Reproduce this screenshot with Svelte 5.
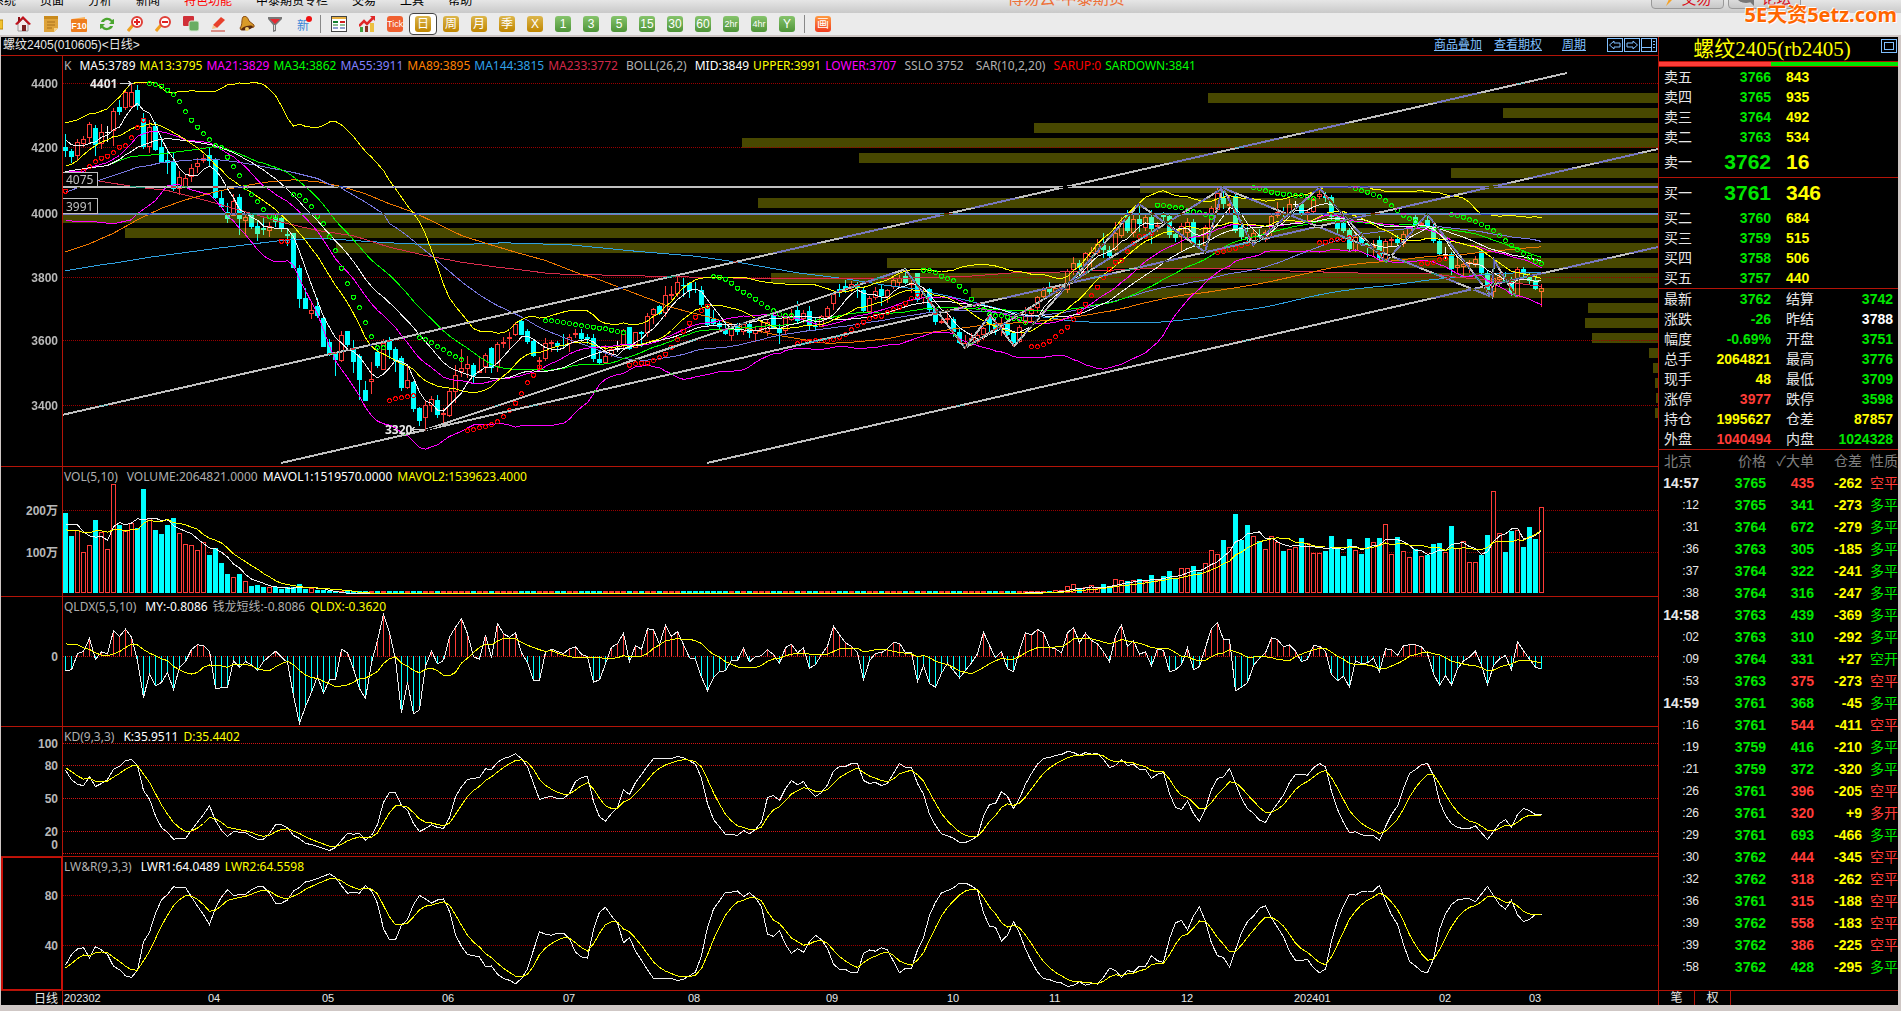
<script>
    const nums = (text) => text.trim().split(/\s+/).map(Number);

    const menu = ['系统', '页面', '分析', '新闻', '特色功能', '中泰期货专栏', '交易', '工具', '帮助'];
    const periods = ['日', '周', '月', '季', 'X', '1', '3', '5', '15', '30', '60', '2hr', '4hr', 'Y'];

    const legend = [
        ['K', 'dim wide'], ['MA5:3789', 'white'], ['MA13:3795', 'yellow'], ['MA21:3829', 'magenta'],
        ['MA34:3862', 'lime'], ['MA55:3911', 'violet'], ['MA89:3895', 'orange'], ['MA144:3815', 'sky'],
        ['MA233:3772', 'crimson wide'], ['BOLL(26,2)', 'dim wide'], ['MID:3849', 'white'], ['UPPER:3991', 'yellow'],
        ['LOWER:3707', 'magenta wide'], ['SSLO 3752', 'dim wider'], ['SAR(10,2,20)', 'dim wide'], ['SARUP:0', 'red'],
        ['SARDOWN:3841', 'lime']
    ];

    const sells = [['卖五', 3766, 843], ['卖四', 3765, 935], ['卖三', 3764, 492], ['卖二', 3763, 534], ['卖一', 3762, 16]];
    const buys = [['买一', 3761, 346], ['买二', 3760, 684], ['买三', 3759, 515], ['买四', 3758, 506], ['买五', 3757, 440]];

    const stats = [
        ['最新', '3762', 'green'], ['结算', '3742', 'green'],
        ['涨跌', '-26', 'green'], ['昨结', '3788', 'white'],
        ['幅度', '-0.69%', 'green'], ['开盘', '3751', 'green'],
        ['总手', '2064821', 'yellow'], ['最高', '3776', 'green'],
        ['现手', '48', 'yellow'], ['最低', '3709', 'green'],
        ['涨停', '3977', 'red'], ['跌停', '3598', 'green'],
        ['持仓', '1995627', 'yellow'], ['仓差', '87857', 'yellow'],
        ['外盘', '1040494', 'red'], ['内盘', '1024328', 'green']
    ];

    // time, price, volume, open interest change, kind
    const ticks = `14:57 3765 435 -262 空平
:12 3765 341 -273 多平
:31 3764 672 -279 多平
:36 3763 305 -185 多平
:37 3764 322 -241 多平
:38 3764 316 -247 多平
14:58 3763 439 -369 多平
:02 3763 310 -292 多平
:09 3764 331 +27 空开
:53 3763 375 -273 空平
14:59 3761 368 -45 多平
:16 3761 544 -411 空平
:19 3759 416 -210 多平
:21 3759 372 -320 多平
:26 3761 396 -205 空平
:26 3761 320 +9 多开
:29 3761 693 -466 多平
:30 3762 444 -345 空平
:32 3762 318 -262 空平
:36 3761 315 -188 空平
:39 3762 558 -183 空平
:39 3762 386 -225 空平
:58 3762 428 -295 多平`.split('\n').map((row) => row.split(' '));

    // candles: colour, high, body top, body bottom, low (third-pixel units)
    const candleParts = [
        [0, `c 253 291 303 321,c 298 303 321 340,r 267 276 317 330,r 258 268 281 290,r 216 223 265 280,c 226 234 285 318,r 222 247 281 297,w 228 247 250 276,r 175 184 244 288,c 150 171 186 195,r 116 127 173 180,r 98 127 171 175,c 105 120 167 180,c 190 203 290 296,r 210 232 290 308,c 215 228 299 303,c 262 291 336 336,c 299 330 339 373,c 309 335 418 423,r 363 381 418 434,r 375 384 410 415,r 342 355 380 395,r 324 340 350 368,r 312 323 333 340,c 295 315 333 352,c 323 330 443 447,c 420 444 470 474,c 460 487 507 520,r 433 454 497 497,c 433 441 508 555,r 488 502 514 557,c 490 496 530 536,c 513 528 552 573,c 500 535 540 555,r 515 528 544 560,c 490 503 516 530,c 500 504 536 545,c 540 552 557 588,c 548 550 655 655,c 646 655 748 774,c 715 744 776 776,r 752 779 791 808,c 745 768 797 805,c 800 805 890 890,c 868 877 913 917,c 905 910 930 978,r 843 856 932 935,c 843 844 885 890,c 870 895 935 970,c 912 919 989 1050,c 993 1020 1053 1053,r 935 986 996 1033,c 893 906 947 955,r 868 878 959 960,c 862 871 899 928,c 892 898 934 965,c 918 924 1013 1022,r 948 989 1013 1018,c 993 996 1076 1085,c 1072 1075 1112 1128,r 1050 1066 1105 1143,r 1038 1047 1069 1085,c 1035 1050 1094 1103,r 1075 1090 1096 1120,r 1018 1022 1099 1100,r 945 976 1027 1060,r 898 953 966 980,r 918 943 958 985,c 940 945 977 1002,r 925 963 968 970,r 910 914 950 970,c 890 894 953 968,r 875 883 951 965`],
        [450, `r 412 427 433 445,r 395 411 415 448,r 365 373 404 408,c 360 363 404 405,c 388 393 425 432,c 420 423 467 472,r 470 481 485 510,r 415 430 477 482,r 420 427 431 455,c 423 430 438 455,c 403 435 437 446,r 402 411 433 457,r 388 400 404 413,c 388 399 416 421,c 403 412 418 432,c 402 415 477 485,c 450 477 488 492,r 435 469 490 492,r 437 447 465 472,w 423 443 446 457,r 386 390 437 444,c 381 381 447 450,r 397 397 443 445,c 393 397 402 440,r 340 347 400 410,r 325 328 345 373,c 316 318 342 345,r 258 286 340 350,r 258 283 288 300,r 225 247 283 292,c 233 255 258 290,c 245 250 272 293,c 246 266 271 278,c 258 270 316 322,c 312 318 376 380,c 330 358 373 376,c 362 368 381 397,c 363 386 402 406,r 372 388 407 423,c 370 382 396 405,r 365 373 395 405,c 370 373 400 415,r 378 389 402 425,r 360 384 389 400,r 358 365 395 407,c 345 346 383 388,c 372 384 399 432,r 348 355 393 405,r 328 352 360 362,c 303 329 362 370,r 330 340 357 370,c 318 333 378 393,c 355 377 382 392,r 345 348 380 382,r 318 324 350 355,r 280 282 311 330,c 252 268 276 292,c 240 257 266 280,r 243 253 262 275,c 245 253 263 295,c 265 271 333 338,r 288 295 335 338,r 262 273 294 300,c 255 268 288 318,r 268 270 292 310,r 230 240 262 268,r 226 233 248 262,c 207 228 248 252,r 240 248 253 278,c 218 220 300 305,r 262 281 294 312,c 265 267 330 335,c 325 328 365 375,r 350 363 370 372,r 328 353 357 368,c 350 358 395 410,c 385 397 430 433,r 405 428 440 448,r 400 415 432 438,r 400 405 425 432,r 380 383 405 420,c 345 352 372 400,c 350 370 392 405,r 352 372 385 408,c 365 372 405 410,c 395 400 430 440,r 375 380 427 430,r 322 342 362 375,r 318 327 342 365,r 288 292 325 340`],
        [30, `r 680 690 712 720,c 665 680 697 702,r 680 683 698 700,r 672 680 690 696,r 627 632 690 700,r 592 608 630 645,c 600 608 622 650,r 575 580 640 645,r 560 577 590 620,r 538 551 580 585,c 519 556 570 595,c 558 570 588 592,r 485 520 570 573,r 470 485 527 535,c 450 463 512 518,r 463 478 520 530,c 430 478 491 515,r 465 471 505 512,c 450 472 508 552,r 485 494 500 515,c 457 463 472 490,c 463 467 525 535,c 520 523 533 545,r 490 498 530 575,r 475 487 520 535,c 478 486 552 560,c 540 552 556 562,r 495 500 557 560,r 437 445 505 510,r 383 400 450 455,c 383 413 432 448,r 405 432 437 465,c 400 407 513 520,c 480 502 530 538,c 500 530 538 545,r 510 520 545 560,c 508 524 530 545,r 510 515 540 545,r 460 468 517 530,r 425 455 468 475,c 440 458 466 480,r 418 432 463 468,w 422 433 436 450,c 428 433 458 468,r 448 455 463 490,r 415 418 455 460,r 385 402 410 418,c 395 408 413 425,c 405 411 472 480,c 462 470 507 518,c 475 490 513 518,c 505 510 567 572,r 520 530 572 575,c 515 530 548 558,c 545 550 560 590,r 540 558 563 590,c 528 540 595 602,r 538 542 600 608,r 530 537 543 560,c 525 537 550 558,r 512 522 552 560,r 500 505 525 530,c 465 470 495 500,r 480 488 495 500,c 460 480 498 502,c 485 498 542 548,c 535 543 582 585,w 562 582 586 598,c 575 583 627 645,r 590 615 625 638,r 605 613 622 655,r 600 606 612 640,r 588 597 612 620,c 568 574 640 645,c 630 640 690 705,r 600 655 695 712,r 635 652 660 680,c 635 660 663 670,c 650 660 698 708,r 620 626 707 712,c 620 628 642 650,c 640 645 662 672,c 645 660 686 690,r 673 685 697 740`]
    ];

    const x = (k) => 64 + 6 * k;
    const priceY = (v) => v / 3 - 6;

    const candles = candleParts.flatMap(([shift, text]) =>
        text.split(',').map((item) => {
            const [tone, ...values] = item.split(' ');
            return [tone, ...values.map((v) => +v + shift)];
        })
    ).map(([tone, high, top, bottom, low], k) => {
        const y = [high, top, bottom, low].map((v) => Math.round(priceY(v)));
        return {
            k, tone, x: x(k), high: y[0], top: y[1], low: y[3],
            height: Math.max(1, y[2] - y[1]),
            bottom: Math.max(y[1] + 1, y[2]),
            close: tone === 'c' ? bottom : top
        };
    });
    const closes = candles.map((c) => c.close);

    function mean(values, k, n) {
        let sum = 0;
        for (let i = k - n + 1; i <= k; i++) sum += values[i];
        return sum / n;
    }

    // moving average; the seed pairs (index, value) cover the bars before the first full window
    function average(values, n, seed, band = 0) {
        const points = [];
        const s = nums(seed);
        for (let i = 0; i < s.length; i += 2) {
            if (s[i] < n - 1) points.push([s[i], s[i + 1]]);
        }
        for (let k = n - 1; k < values.length; k++) {
            const m = mean(values, k, n);
            let spread = 0;
            for (let i = k - n + 1; i <= k; i++) spread += (values[i] - m) ** 2;
            points.push([k, m + band * Math.sqrt(spread / n)]);
        }
        return points;
    }

    const path = (points, toY) => points.map(([k, v]) => `${x(k) + 0.5},${(toY(v) + 0.5).toFixed(1)}`).join(' ');
    const indexed = (values) => values.map((v, k) => [k, v]);

    const averages = [
        ['sky', average(closes, 144, '0 661 6 643 8 638 14 620 20 606 25 594 30 583 36 570 42 563 48 570 54 577 60 582 66 582 73 577 84 583 95 602 105 617 112 635 122 667 130 685 137 705 142 716')],
        ['crimson', average(closes, 233, '0 368 5 390 12 410 17 420 23 448 30 484 36 515 42 540 48 556 54 590 60 615 66 635 72 650 75 656 81 670 95 676 115 684 140 683 150 678 158 667 165 665 180 655 190 653 205 662 220 670 228 670')],
        ['orange', average(closes, 89, '0 604 4 580 8 548 12 508 16 473 20 448 25 424 30 405 34 394 38 388 42 394 46 408 50 430 54 460 58 485 62 520 66 555 70 578 75 605 80 630 86 672')],
        ['violet', average(closes, 55, '0 425 5 393 10 363 12 350 14 345 16 336 20 330 24 325 28 333 32 345 38 366 42 384 44 402 46 413 50 455 53 490')],
        ['lime', average(closes, 34, '0 363 4 352 7 345 9 330 11 318 14 314 17 308 20 301 23 294 25 288 26 290 29 310 32 334')],
        ['magenta', average(closes, 21, '0 363 3 362 4 352 7 336 9 315 11 279 12 257 13 250 14 244 16 244 17 248 19 260')],
        ['white', average(closes, 26, '0 363 4 352 7 345 9 327 10 313 11 303 12 290 15 270 17 264 18 266 21 273 24 282')],
        ['yellow', average(closes, 26, '0 217 2 208 4 190 5 188 7 175 8 155 9 140 10 118 11 100 12 95 15 97 17 127 19 124 21 121 24 124', -2)],
        ['magenta', average(closes, 26, '0 511 5 514 8 520 11 508 12 490 15 450 17 404 19 403 21 418 24 433', 2)],
        ['yellow', average(closes, 13, '0 347 1 341 2 331 3 313 4 298 5 285 6 275 7 268 8 258 9 256 10 246 11 235')],
        ['white', average(closes, 5, '0 268 1 283 2 286 3 286')]
    ];

    // parabolic SAR runs: colour, first bar, shift, values
    const sar = [
        ['red', 0, 0, '422'],
        ['red', 3, 0, '362 349 334 323 317 307 290 286 262 232 209'],
        ['lime', 14, 0, '100 103 107 119 133 154 184 209 230 250 268 286 292 320 349 376 411 433 454 478 497 497'],
        ['red', 36, 0, '572 572'],
        ['lime', 38, 0, '433 436 451 469 497 520 559 601 653 700 740 772 817 859 892 892'],
        ['red', 54, 0, '1051 1045 1042 1039 1036'],
        ['lime', 59, 0, '862 868 877 889 898 910 919 928'],
        ['red', 67, 0, '1141 1138 1132 1129 1123 1114 1099 1081 1058 1030 997 974 950'],
        ['lime', 80, 450, '361 361 363 366 369 373 376 378 380 383 385 389 393 397'],
        ['red', 94, 450, '494 490 488 488 481 472 461 440 418 392 368 350 331 317'],
        ['lime', 108, 450, '229 230 236 248 263 275 286 296 309 322 331 342 346 346'],
        ['red', 122, 450, '430 425 422 421 421 421 418 410 402 388 376 365 355 347 347 337 328 320 308 294 284'],
        ['lime', 143, 450, '209 211 217 227 235 241 257 274 296 316 328 343 346 346 350 354 356 366'],
        ['red', 161, 450, '439 439'],
        ['red', 163, 30, '853 842 829 814 800 778 752 731 706 680 652 626 605 601 574 549 528 527 518'],
        ['lime', 182, 30, '434 435 439 442 442 450 454 457 463 470'],
        ['red', 192, 30, '577 574 567 563 556 550'],
        ['lime', 198, 30, '382 384 391 395 398 401 403 406 406 410 415'],
        ['red', 209, 30, '547 545 541 538 538 532'],
        ['lime', 215, 30, '385 391 395 402 409 421 436 450 464 475 484'],
        ['red', 226, 30, '610 608 606 598 595'],
        ['lime', 231, 30, '463 465 470 478 484 492 500 511 525 541 555 567 580 590 604 610']
    ].flatMap(([tone, first, shift, text]) =>
        nums(text).map((v, i) => ({ tone, x: x(first + i) + 0.5, y: priceY(v + shift) + 0.5 }))
    );

    // left edge of each price level's volume bar, one level every 15px
    const profile = nums('1207 1502 1033 741 858 1450 1139 757 62 124 335 886 770 970 1587 1584 1591 1648 1652 1654 1655 1654')
        .map((left, i) => ({ left, top: 37 + 15 * i }));

    const trends = [
        '61,359 1566,17',
        '280,407 1657,93',
        '424,374 905,213',
        '706,407 1657,191',
        '904,213 964,292 989,259 1013,290 1138,148 1204,196 1222,132 1252,189 1318,132 1385,206 1426,158 1491,241 1493,204 1515,241',
        '964,292 1222,132 1491,241'
    ];

    const priceGrid = [[4400, 27], [4200, 91], [4000, 157], [3800, 221], [3600, 284], [3400, 349]];

    const volumes = [
        ...nums('159 228 210 277 256 180 216 268 73 195 212 190 205 87 175 210 222 195 174 220 253 256 271 247 285 265 309 342 352 342 364 378 375 381 382 380 387 382 382 372 387 383 390 390'),
        ...Array(112).fill(400),
        ...nums('398 398 397 397 397 396 396 396 396 391 391 379 373 388 382 376 385 372 379 358 361 363 361 357 363 345 360 348 333 354 325 325 318 336 310 271 283 240 262 162 240 195 229 244 268 229 247 273 268 262 234 250 280 280 273 228 262 288 237 271 282 234 247 234 193 283 231 274 292 268 289 285 252 249 277 198 265 244 307 307 285 225 94 220 276 213 211 261 201 237 142')
    ];
    const volumeY = (v) => v / 3 - 7;
    const volumeTop = (v) => Math.min(124, Math.round(volumeY(v)));
    const volumeShort = average(volumes, 5, '0 193 1 193 2 193 3 214');
    const volumeLong = average(volumes, 10, '0 208 1 210 2 210 3 216 4 217 5 211 6 211 7 215 8 208');

    const force = [
        ...nums('630 628 580 572 534 597 574 580 511 528 506 530 600 711 640 676 666 636 687 620 603 567 553 555 572 684 682 680 601 620 603 613 630 603 587 572 590 606 706 789 738 695 648 698 658 658 566 577 625 685 714 607 540 461 516 597 757 665 760 748 616 572 610 600 530 500 475 520 589 596 524 592 489 520 530 517 577 607 660'),
        ...nums('270 185 176 183 189 175 169 191 199 275 268 220 170 160 128 214 165 176 115 118 162 104 138 123 162 202 206 260 300 262 244 241 209 210 173 214 198 196 178 192 219 171 161 187 172 233 222 192 167 107 133 157 168 187 268 211 188 187 174 157 158 187 187 274 225 279 290 248 218 240 262 240 217 190 125 165 202 184 235 244 180 127 133 117 127 170 175 187 127 112 157 128 150 160 184 214 136 103 167 151 191 184 226 175 180 244 238 223 172 238 228 170 115 97 148 146 301 290 277 225 203 187 142 147 169 163 182 214 206 166 167 182 253 271 257 290 211 220 217 203 244 175 178 194 166 163 163 169 190 250 284 256 283 235 211 200 182 225 283 225 205 195 238 154 181 206 230 236').map((v) => v + 390)
    ];
    const forceY = (v) => v / 3 - 137;
    const forceLine = average(force, 10, '0 550 1 552 2 553 3 562 4 567 5 577 6 584 7 586 8 580');

    const kValues = [
        ...nums('150 178 193 196 170 199 190 178 147 138 122 118 136 211 237 287 322 337 357 355 355 330 306 283 257 302 330 349 334 336 337 349 357 357 340 314 314 322 346 355 370 373 379 385 391 382 360 340 342 340 360 346 313 246 217 217 256 270 310 334 325 314 322 325 292 230 200 178 175 172 146 148 126 115 110 101 115 140 190'),
        ...nums('628 622 619 625 625 610 574 562 559 634 680 693 670 652 599 613 577 553 528 505 505 505 505 499 503 512 522 565 640 688 710 733 733 736 721 731 718 695 622 616 631 595 571 584 574 602 619 607 584 543 529 529 520 520 571 580 577 586 580 550 520 532 532 580 612 672 706 731 737 744 757 757 749 738 678 643 640 604 619 655 625 582 550 522 505 502 496 493 484 487 496 487 492 490 508 532 526 508 526 522 538 538 565 552 547 610 652 658 633 670 694 655 598 565 560 535 580 625 655 670 690 697 665 640 615 577 553 553 555 533 520 530 604 658 697 727 725 734 736 736 751 709 673 648 595 550 538 524 520 556 634 676 700 712 715 715 707 728 748 724 700 688 711 673 655 661 674 674').map((v) => v - 390)
    ].map((v) => (400 - v) / 3.3);

    const dValues = [];
    for (const k of kValues) {
        dValues.push(dValues.length ? (dValues.at(-1) * 2 + k) / 3 : 78);
    }
    const kdY = (v) => 126 - v * 1.1;
    const lwrY = (v) => 138 - (100 - v) * 1.25;

    const months = [['202302', 63], ['04', 207], ['05', 321], ['06', 441], ['07', 562], ['08', 687], ['09', 825], ['10', 946], ['11', 1048], ['12', 1180], ['202401', 1293], ['02', 1438], ['03', 1528]];
</script>

{#snippet grid(rows, bright)}
    {#each rows as [label, y]}
        <line class="grid-line" class:bright x1="62" x2="100%" y1={y + 0.5} y2={y + 0.5} />
        <text class="axis" x="57" y={y + 5} text-anchor="end">{label}</text>
    {/each}
{/snippet}

{#snippet candleShapes()}
    {#each candles as c}
        {#if c.tone === 'r'}
            <rect class="fill-r" x={c.x} y={c.high} width="1" height={Math.max(0, c.top - c.high)} />
            <rect class="fill-r" x={c.x} y={c.bottom} width="1" height={Math.max(0, c.low - c.bottom)} />
            <rect class="hollow" x={c.x - 1.5} y={c.top + 0.5} width="4" height={Math.max(1, c.height - 1)} />
        {:else}
            <rect class="fill-{c.tone}" x={c.x} y={c.high} width="1" height={c.low - c.high} />
            <rect class="fill-{c.tone}" x={c.x - 2} y={c.top} width="5" height={c.height} />
        {/if}
    {/each}
{/snippet}

<div class="app">
    <header class="titlebar">
        <nav>
            {#each menu as item}
                <a href="#menu" class:hot={item === '特色功能'}>{item}</a>
            {/each}
        </nav>
        <span class="product">博易云-中泰期货</span>
        <div class="header-buttons">
            <button><svg width="14" height="16" viewBox="0 0 14 16"><path d="M9 0 2 8h4l-3 7 9-9H8l4-6z" fill="#f7a223" /></svg>交易</button>
            <button><svg width="20" height="16" viewBox="0 0 20 16"><ellipse cx="9" cy="6" rx="9" ry="6" fill="#777" /><path d="M12 10l5 5V8z" fill="#777" /><path d="M4 6h2M8 6h2M12 6h2" stroke="#fff" stroke-width="2" /></svg>论坛</button>
        </div>
    </header>
    <strong class="brand">5E天资5etz.com</strong>

    <div class="toolbar">
        <button class="first" aria-label="打开"><svg viewBox="0 0 16 16"><rect y="4" width="16" height="9" fill="#f2c230" stroke="#b8860b" /></svg></button>
        <button aria-label="首页"><svg viewBox="0 0 16 16"><path d="M3 8v7h10V8L8 3z" fill="#f4eaea" stroke="#999" /><path d="M0 8 8 0l8 8-2 1-6-6-6 6z" fill="#c1121c" /><path d="M3 1h2v3L3 6z" fill="#8c1016" /><rect x="7" y="9" width="4" height="6" fill="#7a2020" /></svg></button>
        <button aria-label="公告"><svg viewBox="0 0 16 16"><path d="M1 0h14v12l-4 4H1z" fill="#dea33a" /><path d="M1 0h14v3H1z" fill="#c98a1c" /><path d="M4 6h8M4 9h8M4 12h5" stroke="#a8701c" /><path d="m11 16 4-4h-4z" fill="#f6d48a" /></svg></button>
        <button aria-label="F10"><svg viewBox="0 0 16 16"><path d="M1 3 14 1v4H1z" fill="#f9b25a" /><rect y="3" width="16" height="13" rx="1" fill="#ee7d1e" /><text x="8" y="13" text-anchor="middle" class="tile-f10">F10</text></svg></button>
        <button aria-label="刷新"><svg viewBox="0 0 16 16"><path d="M2 6c1-4 8-6 11-2l2-1v5h-5l2-2C9 3 6 4 5 6z" fill="#4ba62f" /><path d="M14 10c-1 4-8 6-11 2l-2 1V8h5l-2 2c3 3 6 2 7 0z" fill="#4ba62f" /></svg></button>
        <button aria-label="放大"><svg viewBox="0 0 16 16"><path d="m1 15 5-6" stroke="#f0a020" stroke-width="3" /><circle cx="10" cy="6" r="5" fill="#fff" stroke="#e04038" stroke-width="2" /><path d="M7 6h6M10 3v6" stroke="#e02020" stroke-width="2" /></svg></button>
        <button aria-label="缩小"><svg viewBox="0 0 16 16"><path d="m1 15 5-6" stroke="#f0a020" stroke-width="3" /><circle cx="10" cy="6" r="5" fill="#fff" stroke="#e04038" stroke-width="2" /><path d="M7 6h6" stroke="#e02020" stroke-width="2" /></svg></button>
        <button aria-label="叠加"><svg viewBox="0 0 16 16"><rect width="11" height="10" rx="1" fill="#d03038" /><rect x="6" y="5" width="10" height="10" rx="2" fill="#69ad62" stroke="#d8ead4" /></svg></button>
        <button aria-label="画笔"><svg viewBox="0 0 16 16"><path d="m2 9 8-8 4 3-8 8z" fill="#e8402c" /><path d="m2 9 4 3-5 1z" fill="#f2c48a" /><path d="M0 15h14" stroke="#c83020" stroke-width="1" /></svg></button>
        <button aria-label="预警"><svg viewBox="0 0 16 16"><path d="M4 1c3-2 5 1 6 4l5 4v2L2 14 1 12c3-4 1-8 3-11z" fill="#d99a28" stroke="#8a4a10" /><ellipse cx="8" cy="12" rx="6" ry="2" transform="rotate(-14 8 12)" fill="#5a2a10" /><circle cx="8" cy="13" r="2" fill="#f6d070" /></svg></button>
        <button aria-label="筛选"><svg viewBox="0 0 16 16"><path d="M1 1h14v2L9 9v6l-3 1V9L1 3z" fill="#777" /><path d="M3 3h10l-5 5z" fill="#e82830" /><path d="M7 9h1v5H7z" fill="#ddd" /></svg></button>
        <button class="news">新<i></i></button>
        <span class="separator"></span>
        <button aria-label="报价"><svg viewBox="0 0 16 16"><rect x="0.5" y="0.5" width="15" height="15" fill="#fff" stroke="#444" /><path d="M1 2h14" stroke="#e8b040" stroke-width="2" /><path d="M2 6h5" stroke="#108030" stroke-width="2" /><path d="M9 6h5" stroke="#d02020" stroke-width="2" /><path d="M2 9h5M9 9h5" stroke="#208030" stroke-width="1" /><path d="M2 12h5M9 12h5" stroke="#2040a0" stroke-width="1" /></svg></button>
        <button aria-label="走势"><svg viewBox="0 0 16 16"><rect x="1" y="11" width="3" height="5" fill="#40a040" /><rect x="6" y="10" width="3" height="6" fill="#8a3020" /><rect x="11" y="7" width="4" height="9" fill="#ecc040" /><path d="m0 10 5-5 3 3 6-6" fill="none" stroke="#e02828" stroke-width="2.5" /><path d="M11 0h5v5z" fill="#e02828" /></svg></button>
        <button><span class="tile tick">Tick</span></button>
        {#each periods as period, i}
            <button class:active={i === 0}><span class="tile" class:gold={i < 5} class:narrow={period.endsWith('hr')}>{period}</span></button>
        {/each}
        <span class="separator"></span>
        <button><span class="tile draw">画</span></button>
    </div>

    <main>
        <section class="charts">
            <div class="chart-head">
                <h1>螺纹2405(010605)&lt;日线&gt;</h1>
                <a href="#overlay">商品叠加</a>
                <a href="#option">查看期权</a>
                <a class="cycle" href="#cycle">周期</a>
                <div class="head-icons">
                    <button aria-label="上一个"><svg width="14" height="12"><path d="M1.500 6 6 2v2h6v4H6v2z" fill="none" stroke="#80c0ff" /></svg></button>
                    <button aria-label="下一个"><svg width="14" height="12"><path d="M12.500 6 8 2v2H2v4h6v2z" fill="none" stroke="#80c0ff" /></svg></button>
                    <button aria-label="布局"><svg width="14" height="12"><path d="M0 8.500h9M9.500 0v12" stroke="#80c0ff" /><path d="M11 2.500h2M11 5.500h2M11 8.500h2" stroke="#80c0ff" /></svg></button>
                </div>
            </div>

            <div class="panel">
                <svg class="plot" height="410">
                    <defs>
                        <clipPath id="levels">
                            {#each profile as level}
                                <rect x={level.left} y={level.top} width="3000" height="10" />
                            {/each}
                        </clipPath>
                    </defs>
                    {#each profile as level}
                        <rect class="level" x={level.left} y={level.top} width="100%" height="10" />
                    {/each}
                    {@render grid(priceGrid, false)}
                    <g>{@render candleShapes()}</g>
                    <g class="tinted" clip-path="url(#levels)">{@render candleShapes()}</g>
                    {#each averages as [tone, points]}
                        <polyline class="line {tone}" points={path(points, priceY)} />
                    {/each}
                    {#each sar as dot}
                        <circle class="line {dot.tone}" cx={dot.x} cy={dot.y} r="2" />
                    {/each}
                    <line class="trend" x1="62" x2="100%" y1="131" y2="131" />
                    <line class="trend" x1="62" x2="100%" y1="158" y2="158" />
                    {#each trends as points}
                        <polyline class="trend" {points} />
                    {/each}
                    <rect class="price-box" x="61.5" y="116.5" width="35" height="14" />
                    <text class="price" x="65" y="128">4075</text>
                    <rect class="price-box" x="61.5" y="142.5" width="35" height="15" />
                    <text class="price" x="65" y="155">3991</text>
                    <text class="mark" x="89" y="32">4401</text>
                    <path class="arrow" d="M119 27.500h11M127 25l4 2.500-4 2.500" />
                    <text class="mark" x="384" y="378">3320</text>
                    <path class="arrow" d="M411 373.500h12M414 371l-4 2.500 4 2.500" />
                    <line class="axis-line" x1="61.5" x2="61.5" y1="0" y2="100%" />
                </svg>
                <p class="legend">
                    {#each legend as [text, tone]}<span class={tone}>{text}</span>{/each}
                </p>
            </div>

            <div class="panel">
                <svg class="plot" height="129">
                    {@render grid([['200万', 43], ['100万', 85]], false)}
                    {#each candles as c}
                        {@const top = volumeTop(volumes[c.k])}
                        {#if c.tone === 'c'}
                            <rect class="fill-c" x={c.x - 2} y={top} width="5" height={126 - top} />
                        {:else}
                            <rect class="hollow" x={c.x - 1.5} y={top + 0.5} width="4" height={125 - top} />
                        {/if}
                    {/each}
                    <polyline class="line white" points={path(volumeShort, volumeY)} />
                    <polyline class="line yellow" points={path(volumeLong, volumeY)} />
                    <line class="axis-line" x1="61.5" x2="61.5" y1="0" y2="100%" />
                </svg>
                <p class="legend loose">
                    <span class="dim wide">VOL(5,10)</span><span class="dim">VOLUME:2064821.0000</span><span class="white">MAVOL1:1519570.0000</span><span class="yellow">MAVOL2:1539623.4000</span>
                </p>
            </div>

            <div class="panel">
                <svg class="plot" height="129">
                    {@render grid([['0', 59]], true)}
                    {#each force as v, k}
                        <line class="stick" class:up={v < 589} x1={x(k) + 0.5} x2={x(k) + 0.5} y1="59" y2={forceY(v)} />
                    {/each}
                    <polyline class="line white" points={path(indexed(force), forceY)} />
                    <polyline class="line yellow" points={path(forceLine, forceY)} />
                    <line class="axis-line" x1="61.5" x2="61.5" y1="0" y2="100%" />
                </svg>
                <p class="legend loose">
                    <span class="dim wide">QLDX(5,5,10)</span><span class="white">MY:-0.8086</span><span class="dim">钱龙短线:-0.8086</span><span class="yellow">QLDX:-0.3620</span>
                </p>
            </div>

            <div class="panel">
                <svg class="plot" height="129">
                    {@render grid([['100', 16], ['80', 38], ['50', 71], ['20', 104]], true)}
                    <line class="grid-line bright" x1="62" x2="100%" y1="126.5" y2="126.5" />
                    <text class="axis" x="57" y="122" text-anchor="end">0</text>
                    <polyline class="line white" points={path(indexed(kValues), kdY)} />
                    <polyline class="line yellow" points={path(indexed(dValues), kdY)} />
                    <line class="axis-line" x1="61.5" x2="61.5" y1="0" y2="100%" />
                </svg>
                <p class="legend loose">
                    <span class="dim wide">KD(9,3,3)</span><span class="white">K:35.9511</span><span class="yellow">D:35.4402</span>
                </p>
            </div>

            <div class="panel">
                <svg class="plot" height="133">
                    {@render grid([['80', 38], ['40', 88]], false)}
                    <polyline class="line white" points={path(indexed(kValues), lwrY)} />
                    <polyline class="line yellow" points={path(indexed(dValues), lwrY)} />
                    <rect class="selected-axis" x="1" y="0" width="60" height="133" />
                </svg>
                <p class="legend loose">
                    <span class="dim wide">LW&amp;R(9,3,3)</span><span class="white">LWR1:64.0489</span><span class="yellow">LWR2:64.5598</span>
                </p>
            </div>

            <svg class="timeline" height="14">
                <text class="unit" x="57" y="12" text-anchor="end">日线</text>
                {#each months as [label, left]}
                    <text x={left} y="11">{label}</text>
                {/each}
                <line class="axis-line" x1="61.5" x2="61.5" y1="0" y2="100%" />
            </svg>
        </section>

        <aside>
            <div class="contract">
                <h2>螺纹2405(rb2405)</h2>
                <button aria-label="窗口"><svg width="14" height="12"><rect x="2.500" y="2.500" width="9" height="7" fill="none" stroke="#80c0ff" stroke-width="1" /></svg></button>
            </div>
            <div class="ratio"><span></span></div>
            <table class="book">
                <tbody>
                    {#each sells as [label, price, lots], i}
                        <tr class:best={i === 4}><th>{label}</th><td>{price}</td><td class="lots">{lots}</td></tr>
                    {/each}
                </tbody>
            </table>
            <table class="book">
                <tbody>
                    {#each buys as [label, price, lots], i}
                        <tr class:best={i === 0}><th>{label}</th><td>{price}</td><td class="lots">{lots}</td></tr>
                    {/each}
                </tbody>
            </table>
            <dl class="stats">
                {#each stats as [label, value, tone]}
                    <div><dt>{label}</dt><dd class={tone}>{value}</dd></div>
                {/each}
            </dl>
            <table class="ticks">
                <thead>
                    <tr><th>北京</th><th>价格</th><th>✓大单</th><th>仓差</th><th>性质</th></tr>
                </thead>
                <tbody>
                    {#each ticks as [time, price, lots, change, kind]}
                        {@const tone = kind === '空平' || kind === '多开' ? 'red' : 'green'}
                        <tr>
                            <td class={time.startsWith(':') ? 'second' : 'minute'}>{time}</td>
                            <td class="green">{price}</td>
                            <td class={tone}>{lots}</td>
                            <td class="yellow">{change}</td>
                            <td class="kind {tone}">{kind}</td>
                        </tr>
                    {/each}
                </tbody>
            </table>
            <div class="tabs">
                <button>笔</button>
                <button>权</button>
            </div>
        </aside>
    </main>
</div>

<style>
    :global(body) {
        background: #cfc7c5;
    }

    .app {
        position: relative;
        font-family: "Liberation Sans", "Noto Sans CJK SC", sans-serif;
        font-size: 12px;
        overflow: hidden;
        padding-bottom: 6px;
    }

    button {
        padding: 0;
        border: none;
        background: none;
        font: inherit;
        color: inherit;
    }

    h1, h2, p, dl, dd {
        margin: 0;
        font-weight: normal;
    }

    /* title bar */
    .titlebar {
        display: flex;
        align-items: flex-start;
        height: 13px;
        overflow: hidden;
        background: linear-gradient(#e6e6e6, #c9c9c9);
    }

    nav {
        display: flex;
        flex: 0 0 53%;
        gap: 24px;
        margin: -6px 0 0 -8px;
        line-height: 14px;
    }

    nav a {
        color: #000;
        text-decoration: none;
        white-space: nowrap;
    }

    nav .hot {
        color: #f00;
    }

    .product {
        margin: -11px 0 0 8px;
        font-size: 16px;
        line-height: 20px;
        color: #ee7038;
        white-space: nowrap;
    }

    .header-buttons {
        flex: 1;
        display: flex;
        justify-content: flex-end;
        gap: 4px;
        margin: -11px 100px 0 0;
    }

    .header-buttons button {
        display: flex;
        align-items: center;
        justify-content: center;
        gap: 4px;
        width: 73px;
        height: 20px;
        border: 1px solid #999;
        border-radius: 4px;
        background: linear-gradient(#f4f4f4, #c8c8c8);
        font-size: 15px;
        line-height: 16px;
        color: #d8101c;
    }

    .brand {
        position: absolute;
        top: 2px;
        right: 4px;
        font: bold 20px/26px "Noto Sans", "Noto Sans CJK SC", sans-serif;
        color: #ff6600;
        text-shadow: 1px 1px #fff, -1px -1px #fff;
    }

    /* toolbar */
    .toolbar {
        display: flex;
        align-items: center;
        height: 22px;
        background: #ebebeb;
        border-bottom: 2px solid #cfc7c5;
    }

    .toolbar button {
        display: flex;
        align-items: center;
        justify-content: center;
        flex: none;
        width: 28px;
        height: 22px;
    }

    .toolbar .first {
        margin-left: -19px;
    }

    .toolbar svg {
        width: 16px;
        height: 16px;
    }

    .tile-f10 {
        font: bold 9px "Liberation Sans", sans-serif;
        fill: #fff;
    }

    .toolbar .news {
        position: relative;
        color: #3a86d8;
    }

    .news i {
        position: absolute;
        top: 3px;
        right: 5px;
        width: 6px;
        height: 6px;
        border-radius: 50%;
        background: #f01010;
    }

    .separator {
        width: 1px;
        height: 18px;
        margin: 0 4px 0 3px;
        background: #888;
    }

    .toolbar .active {
        box-sizing: border-box;
        border: 1px solid #444;
        border-radius: 4px;
        background: #fff;
    }

    .tile {
        width: 16px;
        height: 16px;
        border-radius: 3px;
        background: linear-gradient(#86c46c, #4e9438);
        color: #fff;
        font-size: 12px;
        line-height: 16px;
        text-align: center;
    }

    .tile.gold {
        background: linear-gradient(#dcb64c, #c08600);
    }

    .tile.tick, .tile.draw {
        background: linear-gradient(#ff9a40, #f03c20);
    }

    .tile.tick {
        background: #f06030;
    }

    .tile.narrow, .tile.tick {
        font-size: 9px;
    }

    /* charts */
    main {
        display: flex;
        margin: 0 3px 0 1px;
        background: #000;
    }

    .charts {
        flex: 1;
        min-width: 0;
    }

    .chart-head {
        display: flex;
        align-items: flex-start;
        height: 18px;
        padding-left: 2px;
        border-bottom: 1px solid #b41408;
        line-height: 17px;
        color: #e8e8e8;
    }

    .chart-head h1 {
        flex: 1;
        font-size: 12px;
    }

    .chart-head a {
        margin-right: 12px;
        color: #80c0ff;
    }

    .chart-head .cycle {
        margin: 0 21px 0 8px;
    }

    .head-icons {
        display: flex;
        gap: 1px;
        padding: 1px 1px 0 0;
    }

    .head-icons button, .contract button {
        display: flex;
        box-sizing: border-box;
        width: 16px;
        height: 14px;
        border: 1px solid #80c0ff;
    }

    .panel {
        display: grid;
        border-bottom: 1px solid #b41408;
    }

    .plot, .timeline {
        display: block;
        width: 100%;
        shape-rendering: crispEdges;
    }

    .plot {
        grid-area: 1 / 1;
        isolation: isolate;
    }

    .legend {
        grid-area: 1 / 1;
        align-self: start;
        display: flex;
        gap: 4px;
        padding: 2px 0 0 63px;
        font: 12px/16px "Noto Sans", "Noto Sans CJK SC", sans-serif;
        white-space: nowrap;
        overflow: hidden;
        z-index: 1;
    }

    .legend.loose {
        gap: 5px;
    }

    .wide {
        margin-right: 4px;
    }

    .wider {
        margin-right: 8px;
    }

    .dim { color: #b0b0b0; stroke: #b0b0b0; }
    .white { color: #fff; stroke: #f0f0f0; }
    .yellow { color: #ff0; stroke: #ff0; }
    .magenta { color: #f0f; stroke: #f0f; }
    .lime { color: #0f0; stroke: #0f0; }
    .violet { color: #8080ff; stroke: #7878e0; }
    .orange { color: #ff8000; stroke: #f07800; }
    .sky { color: #30a0e8; stroke: #30a0e0; }
    .crimson { color: #d02848; stroke: #d82c4c; }
    .red { color: #ff3c38; stroke: #f00; }
    .green { color: #00e600; }

    .legend .red {
        color: #f00;
    }

    .line {
        fill: none;
        stroke-width: 1;
    }

    .level {
        fill: #484800;
    }

    .grid-line {
        stroke: #900;
        stroke-dasharray: 1 1;
    }

    .grid-line.bright {
        stroke: #d01414;
    }

    .axis-line {
        stroke: #b41408;
    }

    .axis {
        font: bold 12px "Liberation Sans", "Noto Sans CJK SC", sans-serif;
        fill: #b8b8b8;
    }

    .fill-c { fill: #0ff; }
    .fill-r { fill: #ff3c38; }
    .fill-w { fill: #fff; }

    .hollow {
        fill: #000;
        stroke: #ff3c38;
    }

    .tinted .fill-c { fill: #48ffb7; }
    .tinted .fill-r { fill: #ff7430; }
    .tinted .hollow { fill: #484800; stroke: #ff7430; }

    .trend {
        fill: none;
        stroke: #c0c0c0;
        stroke-width: 2;
        mix-blend-mode: difference;
    }

    .price-box {
        fill: #000;
        stroke: #c0c0c0;
    }

    .price {
        font: 12px "Noto Sans", sans-serif;
        fill: #c0c0c0;
    }

    .mark {
        font: bold 12px "Noto Sans", sans-serif;
        fill: #e8e8e8;
    }

    .arrow {
        fill: none;
        stroke: #d0d0d0;
    }

    .stick { stroke: #0ff; }
    .stick.up { stroke: #ff3c38; }

    .selected-axis {
        fill: none;
        stroke: #c81008;
        stroke-width: 2;
    }

    .timeline text {
        font-size: 11px;
        fill: #e8e8e8;
    }

    .timeline .unit {
        font-size: 12px;
    }

    /* quote column */
    aside {
        display: flex;
        flex-direction: column;
        box-sizing: border-box;
        width: 240px;
        flex: none;
        border-left: 1px solid #b41408;
        font-size: 14px;
        color: #e8e8e8;
    }

    .contract {
        display: flex;
        align-items: center;
        height: 24px;
        border-bottom: 1px solid #b41408;
    }

    .contract h2 {
        flex: 1;
        padding-left: 4px;
        font: 21px/24px "Liberation Serif", "Noto Sans CJK SC", serif;
        text-align: center;
        color: #ff0;
    }

    .contract button {
        margin: 0 1px 7px 0;
    }

    .ratio {
        height: 4px;
        background: #00e600;
        border-bottom: 1px solid #b41408;
    }

    .ratio span {
        display: block;
        width: 47%;
        height: 4px;
        background: #ff3c38;
    }

    table {
        width: 100%;
        table-layout: fixed;
        border-collapse: collapse;
    }

    th, td {
        padding: 0;
        font-weight: normal;
        white-space: nowrap;
    }

    .book {
        border-bottom: 1px solid #b41408;
    }

    .book tr {
        height: 20px;
        line-height: 20px;
    }

    .book th {
        width: 35px;
        padding-left: 5px;
        text-align: left;
    }

    .book td {
        width: 72px;
        text-align: right;
        font-weight: bold;
        color: #00e600;
    }

    .book .lots {
        width: auto;
        padding-left: 15px;
        text-align: left;
        color: #ff0;
    }

    .book .best {
        height: 30px;
        line-height: 28px;
    }

    .best td {
        font-size: 21px;
    }

    .stats {
        display: grid;
        grid-template-columns: 107px 107px;
        column-gap: 15px;
        padding-left: 5px;
        border-bottom: 1px solid #b41408;
    }

    .stats div {
        display: flex;
        justify-content: space-between;
        height: 20px;
        line-height: 20px;
    }

    .stats dd {
        font-weight: bold;
    }

    .ticks tr {
        height: 22px;
        line-height: 22px;
    }

    .ticks th {
        color: #808080;
        text-align: right;
    }

    .ticks td {
        font-weight: bold;
        text-align: right;
    }

    .ticks th:nth-child(1) {
        width: 35px;
        padding-left: 5px;
        text-align: left;
    }

    .ticks th:nth-child(2) { width: 67px; }
    .ticks th:nth-child(3) { width: 48px; }
    .ticks th:nth-child(4) { width: 48px; }

    .ticks .second {
        font-size: 12px;
        font-weight: normal;
    }

    .ticks .kind {
        font-weight: normal;
    }

    .tabs {
        display: flex;
        height: 14px;
        margin-top: auto;
        border-top: 1px solid #b41408;
        font-size: 12px;
        line-height: 14px;
    }

    .tabs button {
        width: 36px;
        border-right: 1px solid #b41408;
    }
</style>
